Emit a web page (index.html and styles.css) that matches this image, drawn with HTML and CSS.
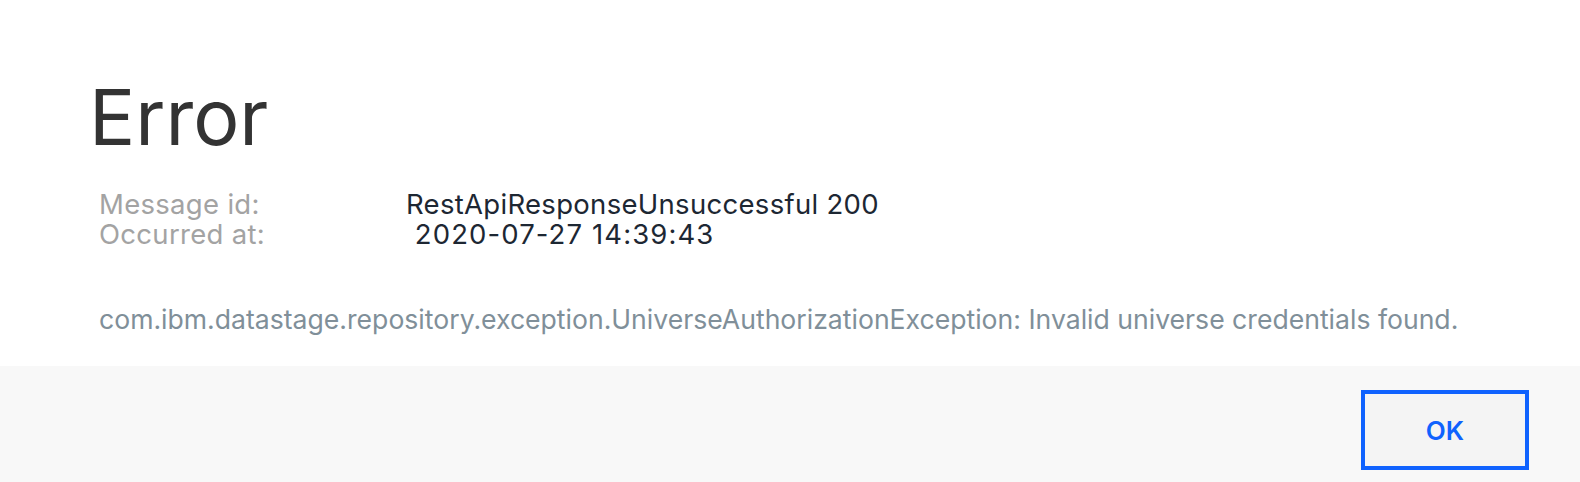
FILE: index.html
```html
<!DOCTYPE html>
<html>
<head>
<meta charset="utf-8">
<link rel="stylesheet" href="styles.css">
</head>
<body>
<div class="dialog">
  <div class="content">
    <h1 class="title">Error</h1>
    <div class="meta">
      <div class="row"><span class="label">Message id:</span><span class="value">RestApiResponseUnsuccessful 200</span></div>
      <div class="row"><span class="label">Occurred at:</span><span class="value date">&nbsp;2020-07-27 14:39:43</span></div>
    </div>
    <p class="detail">com.ibm.datastage.repository.exception.UniverseAuthorizationException: Invalid universe credentials found.</p>
  </div>
  <div class="footer">
    <button class="ok">OK</button>
  </div>
</div>
</body>
</html>
```
FILE: styles.css
```css
html, body {
  margin: 0;
  padding: 0;
  background: #ffffff;
}
body {
  font-family: Inter, "Liberation Sans", sans-serif;
  height: 482px;
  overflow: hidden;
}
.dialog {
  display: flex;
  flex-direction: column;
  height: 482px;
}
.content {
  flex: none;
  height: 366px;
  padding: 77px 0 0 99px;
  box-sizing: border-box;
}
.title {
  margin: 0 0 0 -10px;
  font-size: 77px;
  font-weight: 400;
  line-height: 80px;
  color: #333333;
}
.meta {
  margin-top: 32px;
  display: flex;
  flex-direction: column;
}
.row {
  display: flex;
  font-size: 27.5px;
  line-height: 30px;
  letter-spacing: 0.3px;
}
.label {
  width: 307px;
  color: #a3a3a3;
}
.value {
  color: #1d2733;
}
.date {
  letter-spacing: 1.1px;
}
.detail {
  margin: 54px 0 0 0;
  font-size: 26.6px;
  line-height: 32px;
  color: #808f99;
  white-space: nowrap;
}
.footer {
  flex: 1;
  background: #f8f8f8;
  display: flex;
  justify-content: flex-end;
  align-items: flex-start;
  padding: 24px 51px 0 0;
}
.ok {
  width: 168px;
  height: 80px;
  border: 4px solid #0f62fe;
  background: #f4f4f4;
  color: #0f62fe;
  font-family: Inter, "Liberation Sans", sans-serif;
  font-size: 26px;
  font-weight: 600;
  padding: 0;
  cursor: pointer;
}
```
